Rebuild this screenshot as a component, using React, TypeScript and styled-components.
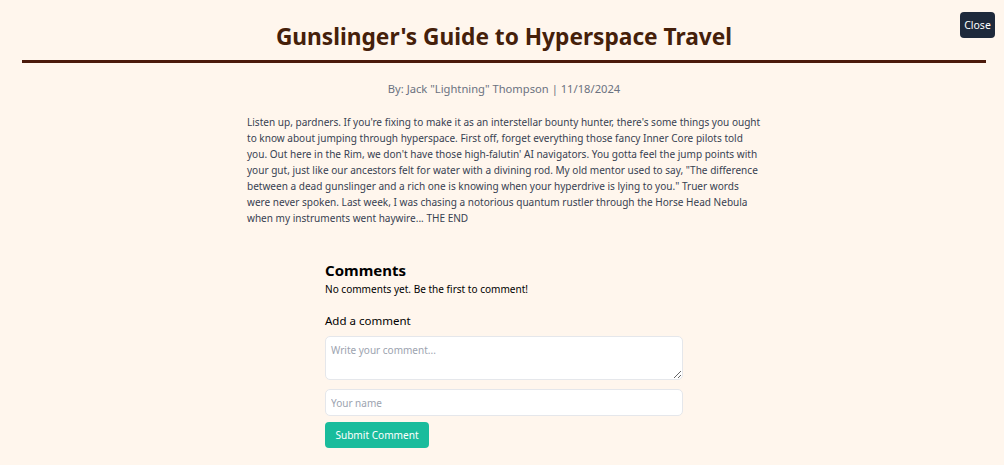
import React from "react";
import styled, { createGlobalStyle } from "styled-components";

const GlobalStyle = createGlobalStyle`
  html, body {
    margin: 0;
    padding: 0;
    background: #fff6ed;
  }
  body {
    font-family: "Noto Sans", "Open Sans", sans-serif;
    color: #374151;
  }
  * { box-sizing: border-box; }
`;

const Page = styled.div`
  position: relative;
  min-height: 465px;
  padding: 0 18px 20px 22px;
`;

const Header = styled.header`
  border-bottom: 3px solid #4b1a0b;
  padding: 21px 0 7px;
  text-align: center;
`;

const Title = styled.h1`
  margin: 0;
  font-size: 22.7px;
  line-height: 32px;
  font-weight: 700;
  color: #45200a;
`;

const CloseButton = styled.button`
  position: absolute;
  top: 12px;
  right: 9px;
  width: 35px;
  height: 26px;
  padding: 0;
  border: none;
  border-radius: 4px;
  background: #1e293b;
  color: #fff;
  font-family: inherit;
  font-size: 10.5px;
  cursor: pointer;
`;

const Byline = styled.p`
  margin: 16px 0 0;
  text-align: center;
  font-size: 11.2px;
  line-height: 19px;
  color: #6b7280;
`;

const Body = styled.p`
  width: 514px;
  margin: 16px auto 0;
  font-size: 10.05px;
  line-height: 16px;
  color: #374151;
`;

const Comments = styled.section`
  width: 358px;
  margin: 33px auto 0;
  display: flex;
  flex-direction: column;
`;

const CommentsTitle = styled.h2`
  margin: 0;
  font-size: 15px;
  line-height: 22px;
  font-weight: 700;
  color: #000;
`;

const Empty = styled.p`
  margin: 0;
  font-size: 10.05px;
  line-height: 16px;
  color: #000;
`;

const AddLabel = styled.h3`
  margin: 15px 0 0;
  font-size: 11.5px;
  line-height: 18px;
  font-weight: 400;
  color: #000;
`;

const Form = styled.form`
  display: flex;
  flex-direction: column;
  align-items: flex-start;
  margin-top: 6px;
`;

const TextArea = styled.textarea`
  width: 100%;
  height: 44px;
  padding: 6px 5px;
  border: 1px solid #e5e7eb;
  border-radius: 5px;
  background: #fff;
  font-family: inherit;
  font-size: 10px;
  resize: vertical;
  outline: none;
  &::placeholder { color: #9ca3af; }
`;

const Input = styled.input`
  width: 100%;
  height: 27px;
  margin-top: 9px;
  padding: 0 5px;
  border: 1px solid #e5e7eb;
  border-radius: 5px;
  background: #fff;
  font-family: inherit;
  font-size: 10px;
  outline: none;
  &::placeholder { color: #9ca3af; }
`;

const Submit = styled.button`
  margin-top: 6px;
  height: 26px;
  width: 104px;
  padding: 0;
  border: none;
  border-radius: 4px;
  background: #1abc9c;
  color: #fff;
  font-family: inherit;
  font-size: 10.1px;
  cursor: pointer;
`;

export default function App() {
  return (
    <>
      <GlobalStyle />
      <Page>
        <CloseButton>Close</CloseButton>
        <Header>
          <Title>Gunslinger's Guide to Hyperspace Travel</Title>
        </Header>
        <Byline>By: Jack "Lightning" Thompson | 11/18/2024</Byline>
        <Body>
          Listen up, pardners. If you're fixing to make it as an interstellar bounty hunter, there's some things you
          ought to know about jumping through hyperspace. First off, forget everything those fancy Inner Core pilots
          told you. Out here in the Rim, we don't have those high-falutin' AI navigators. You gotta feel the jump points
          with your gut, just like our ancestors felt for water with a divining rod. My old mentor used to say, "The
          difference between a dead gunslinger and a rich one is knowing when your hyperdrive is lying to you." Truer
          words were never spoken. Last week, I was chasing a notorious quantum rustler through the Horse Head Nebula
          when my instruments went haywire... THE END
        </Body>
        <Comments>
          <CommentsTitle>Comments</CommentsTitle>
          <Empty>No comments yet. Be the first to comment!</Empty>
          <AddLabel>Add a comment</AddLabel>
          <Form onSubmit={(e) => e.preventDefault()}>
            <TextArea placeholder="Write your comment..." />
            <Input placeholder="Your name" />
            <Submit type="submit">Submit Comment</Submit>
          </Form>
        </Comments>
      </Page>
    </>
  );
}
